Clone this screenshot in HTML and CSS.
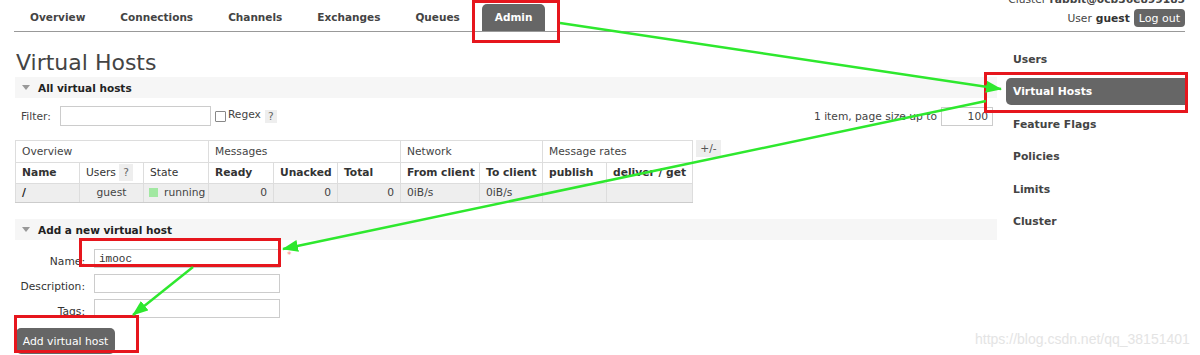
FILE: index.html
```html
<!DOCTYPE html>
<html lang="en">
<head>
    <meta charset="UTF-8">
    <meta name="viewport" content="width=device-width, initial-scale=1.0">
    <title>RabbitMQ Management</title>
    <link rel="stylesheet" href="styles.css">
</head>
<body>
    <div class="header">
        <ul class="tabs">
            <li>Overview</li>
            <li>Connections</li>
            <li>Channels</li>
            <li>Exchanges</li>
            <li>Queues</li>
            <li class="active">Admin</li>
        </ul>
        <div class="login">
            <div class="cluster">Cluster <b>rabbit@0cb36e899185</b></div>
            <div class="user">User <b>guest</b> <button class="logout">Log out</button></div>
        </div>
    </div>

    <div class="page">
        <div class="main">
            <h1>Virtual Hosts</h1>

            <div class="section">
                <h2><span class="tri"></span>All virtual hosts</h2>
                <div class="filter-row">
                    <span>Filter:</span>
                    <input type="text" class="filter">
                    <span class="check"></span>
                    <span class="regex">Regex</span>
                    <span class="help">?</span>
                    <span class="paging">1 item, page size up to <input type="text" class="pagesize" value="100"></span>
                </div>

                <div class="table-wrap">
                    <table class="list">
                        <colgroup>
                            <col><col><col><col><col><col><col><col><col><col>
                        </colgroup>
                        <thead>
                            <tr class="grp">
                                <th colspan="3">Overview</th>
                                <th colspan="3">Messages</th>
                                <th colspan="2">Network</th>
                                <th colspan="2">Message rates</th>
                            </tr>
                            <tr class="cols">
                                <th class="b">Name</th>
                                <th>Users <span class="help">?</span></th>
                                <th>State</th>
                                <th class="b">Ready</th>
                                <th class="b">Unacked</th>
                                <th class="b">Total</th>
                                <th class="b">From client</th>
                                <th class="b">To client</th>
                                <th class="b">publish</th>
                                <th class="b">deliver / get</th>
                            </tr>
                        </thead>
                        <tbody>
                            <tr>
                                <td class="b">/</td>
                                <td class="c">guest</td>
                                <td><span class="dot"></span>running</td>
                                <td class="r">0</td>
                                <td class="r">0</td>
                                <td class="r">0</td>
                                <td>0iB/s</td>
                                <td>0iB/s</td>
                                <td></td>
                                <td></td>
                            </tr>
                        </tbody>
                    </table>
                    <span class="toggle">+/-</span>
                </div>
            </div>

            <div class="section add">
                <h2><span class="tri"></span>Add a new virtual host</h2>
                <div class="form">
                    <label>Name:</label>
                    <input type="text" class="mono" value="imooc">
                    <span class="mand">*</span>
                    <label>Description:</label>
                    <input type="text">
                    <span></span>
                    <label>Tags:</label>
                    <input type="text">
                    <span></span>
                </div>
                <button class="add-btn">Add virtual host</button>
            </div>
        </div>

        <ul class="rhs">
            <li>Users</li>
            <li class="active">Virtual Hosts</li>
            <li>Feature Flags</li>
            <li>Policies</li>
            <li>Limits</li>
            <li>Cluster</li>
        </ul>
    </div>

    <svg class="marks" width="1200" height="355" viewBox="0 0 1200 355">
        <defs>
            <marker id="head" markerUnits="userSpaceOnUse" markerWidth="16" markerHeight="12" refX="15" refY="6" orient="auto">
                <path d="M0,0 L16,6 L0,12 z" fill="#2ee82e"/>
            </marker>
        </defs>
        <rect x="473.5" y="1.5" width="85" height="40" fill="none" stroke="#e6161d" stroke-width="3"/>
        <rect x="985.5" y="73.5" width="201" height="38" fill="none" stroke="#e6161d" stroke-width="3"/>
        <rect x="80.5" y="239.5" width="199" height="26" fill="none" stroke="#e6161d" stroke-width="3"/>
        <rect x="15.5" y="316.5" width="122" height="35" fill="none" stroke="#e6161d" stroke-width="3"/>
        <line x1="560" y1="23" x2="1001" y2="89" stroke="#2ee82e" stroke-width="2.5" marker-end="url(#head)"/>
        <line x1="986" y1="101" x2="283" y2="249" stroke="#2ee82e" stroke-width="2.5" marker-end="url(#head)"/>
        <line x1="193" y1="267" x2="133" y2="315" stroke="#2ee82e" stroke-width="2.5" marker-end="url(#head)"/>
    </svg>

    <div class="watermark">https://blog.csdn.net/qq_38151401</div>
</body>
</html>
```

FILE: styles.css
```css
body {
    margin: 0;
    width: 1200px;
    height: 355px;
    overflow: hidden;
    position: relative;
    font-family: "DejaVu Sans", Verdana, sans-serif;
    font-size: 10.7px;
    color: #444;
    background: #fff;
}

/* top bar */

.header {
    display: flex;
    justify-content: space-between;
    align-items: flex-end;
    height: 31px;
    margin: 0 15px 0 14px;
    border-bottom: 1px solid #999;
}

.tabs {
    list-style: none;
    margin: 0;
    padding: 0 0 0 3px;
    display: flex;
    gap: 9px;
}

.tabs li {
    padding: 0 13px;
    line-height: 27px;
    font-size: 10.5px;
    font-weight: bold;
    color: #444;
    border-radius: 5px 5px 0 0;
}

.tabs li.active {
    background: #666;
    color: #fff;
}

.login {
    text-align: right;
    padding-bottom: 4px;
}

.cluster {
    line-height: 19px;
}

.user {
    display: flex;
    align-items: center;
    justify-content: flex-end;
    gap: 4px;
    height: 18px;
}

.user b {
    color: #333;
}

.logout {
    height: 18px;
    padding: 0 5px;
    border: 0;
    border-radius: 4px;
    background: #666;
    color: #fff;
    font-family: inherit;
    font-size: 11px;
}

/* page */

.page {
    display: flex;
    gap: 9px;
    margin-left: 15px;
}

.main {
    width: 982px;
    padding-top: 18px;
}

h1 {
    margin: 0 0 1px 1px;
    font-size: 22px;
    font-weight: normal;
    line-height: 26px;
    color: #444;
}

.section h2 {
    display: flex;
    align-items: center;
    margin: 0;
    height: 21px;
    padding-left: 7px;
    background: #f6f6f6;
    font-size: 10.5px;
    font-weight: bold;
    color: #222;
}

.tri {
    width: 0;
    height: 0;
    margin-right: 8px;
    border-left: 4px solid transparent;
    border-right: 4px solid transparent;
    border-top: 5px solid #999;
}

.filter-row {
    display: flex;
    align-items: center;
    height: 20px;
    margin: 8px 4px 0 0;
    padding-left: 6px;
}

.filter-row input {
    box-sizing: border-box;
    border: 1px solid #ccc;
    padding: 0 4px;
    font-family: inherit;
    font-size: 10.7px;
    color: #444;
}

.filter {
    width: 151px;
    height: 20px;
    margin-left: 9px;
}

.check {
    width: 11px;
    height: 11px;
    margin-left: 4px;
    border: 1px solid #888;
    box-sizing: border-box;
    border-radius: 1px;
}

.regex {
    margin: 0 0 4px 2px;
}

.help {
    display: inline-block;
    padding: 0 3px;
    background: #eee;
    color: #666;
    line-height: 13px;
}

.filter-row .help {
    margin-left: 4px;
}

.paging {
    margin-left: auto;
    display: flex;
    align-items: center;
    gap: 4px;
}

.pagesize {
    width: 52px;
    height: 19px;
    text-align: right;
}

/* table */

.table-wrap {
    display: flex;
    align-items: flex-start;
    gap: 3px;
    margin-top: 14px;
}

.list {
    width: 677px;
    table-layout: fixed;
    border-collapse: collapse;
    border: 1px solid #ccc;
}

.list col:nth-child(1),
.list col:nth-child(2),
.list col:nth-child(5),
.list col:nth-child(9) { width: 64px; }
.list col:nth-child(3),
.list col:nth-child(4) { width: 65px; }
.list col:nth-child(6),
.list col:nth-child(8) { width: 63px; }
.list col:nth-child(7) { width: 79px; }
.list col:nth-child(10) { width: 86px; }

.list th,
.list td {
    padding: 0 6px;
    text-align: left;
    font-weight: normal;
    white-space: nowrap;
    overflow: hidden;
    border: 1px solid #ddd;
}

.list .grp th {
    line-height: 21px;
}

.list .cols th {
    line-height: 20px;
    color: #333;
}

.list td {
    line-height: 18px;
    background: #eee;
    border-color: #ddd;
    border-bottom-color: #ccc;
}

.list .b {
    font-weight: bold;
    color: #222;
}

.list .c { text-align: center; }
.list .r { text-align: right; }

.list th .help {
    line-height: 17px;
    padding: 0 4px;
}

.dot {
    display: inline-block;
    width: 9px;
    height: 9px;
    margin: 0 6px 0 -1px;
    background: #a2e8a2;
    vertical-align: -1px;
}

.toggle {
    width: 25px;
    line-height: 17px;
    text-align: center;
    background: #eee;
    color: #555;
}

/* add form */

.add {
    margin-top: 16px;
}

.form {
    display: grid;
    grid-template-columns: 70px 186px auto;
    column-gap: 9px;
    row-gap: 6px;
    margin-top: 9px;
}

.form label {
    text-align: right;
    line-height: 19px;
    padding-top: 3px;
    height: 19px;
    box-sizing: border-box;
    color: #333;
}

.form input {
    box-sizing: border-box;
    height: 19px;
    border: 1px solid #ccc;
    padding: 0 4px;
    font-family: inherit;
    font-size: 10.7px;
}

.form .mono {
    font-family: "Liberation Mono", "Courier New", monospace;
    font-size: 11px;
    color: #333;
}

.mand {
    margin-left: -2px;
    color: #f88;
    font-size: 9px;
    line-height: 12px;
}

.add-btn {
    display: block;
    width: 99px;
    height: 26px;
    margin: 10px 0 0 1px;
    padding: 0;
    border: 0;
    border-radius: 5px;
    background: #666;
    color: #fff;
    font-family: inherit;
    font-size: 10.8px;
}

/* right menu */

.rhs {
    list-style: none;
    width: 179px;
    margin: 13.5px 0 0;
    padding: 0;
}

.rhs li {
    line-height: 27px;
    margin-bottom: 5.6px;
    padding-left: 7px;
    font-size: 10.8px;
    font-weight: bold;
    color: #444;
    border-radius: 5px 0 0 5px;
}

.rhs li.active {
    background: #666;
    color: #fff;
}

/* screenshot marks */

.marks {
    position: absolute;
    left: 0;
    top: 0;
    pointer-events: none;
}

.watermark {
    position: absolute;
    left: 975px;
    top: 331px;
    font-family: "Liberation Sans", Arial, sans-serif;
    font-size: 14px;
    color: #e4e4e4;
}
```
